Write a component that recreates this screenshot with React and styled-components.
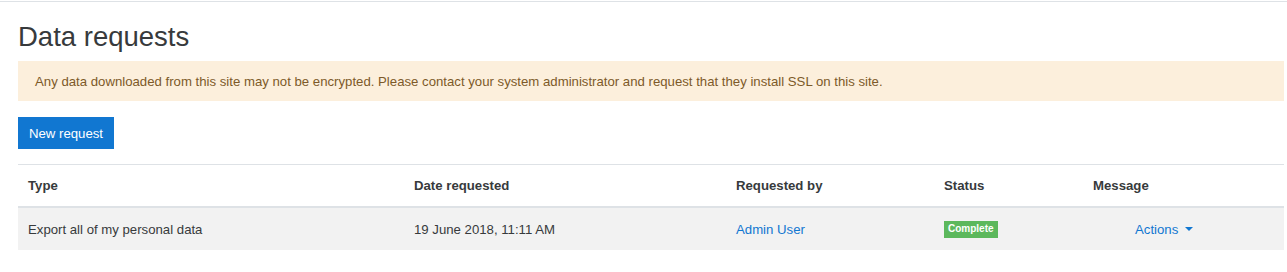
import React from "react";
import styled, { createGlobalStyle } from "styled-components";

const GlobalStyle = createGlobalStyle`
  body {
    margin: 0;
    background: #fff;
    font-family: "Liberation Sans", Arial, sans-serif;
    color: #373a3c;
  }
`;

const TopRule = styled.div`
  height: 1px;
  margin-top: 1px;
  background: #dee2e6;
`;

const Page = styled.div`
  padding: 0 3px 0 18px;
`;

const Heading = styled.h2`
  margin: 0;
  padding-top: 18px;
  font-size: 27.5px;
  font-weight: 400;
  line-height: 33px;
  color: #373a3c;
`;

const Alert = styled.div`
  margin-top: 8px;
  height: 40px;
  display: flex;
  align-items: center;
  padding: 0 17px;
  background: #fcefdc;
  color: #7d5a29;
  font-size: 13.2px;
`;

const Button = styled.button`
  margin-top: 16px;
  height: 32px;
  padding: 0 11px;
  border: none;
  background: #1177d1;
  color: #fff;
  font-family: inherit;
  font-size: 13.2px;
`;

const Table = styled.div`
  margin-top: 15px;
  border-top: 1px solid #dee2e6;
  font-size: 13.2px;
`;

const Row = styled.div`
  display: grid;
  grid-template-columns: 386px 322px 208px 149px 1fr;
  align-items: center;
  height: ${(p) => (p.$head ? 41 : 42)}px;
  background: ${(p) => (p.$head ? "#fff" : "#f2f2f2")};
  border-bottom: ${(p) => (p.$head ? "2px solid #dee2e6" : "none")};
  font-weight: ${(p) => (p.$head ? 700 : 400)};
`;

const Cell = styled.div`
  padding-left: ${(p) => p.$indent || 10}px;
`;

const Link = styled.a`
  color: #1177d1;
  text-decoration: none;
`;

const Badge = styled.span`
  display: inline-block;
  padding: 2px 4px 3px;
  background: #5cb85c;
  color: #fff;
  font-size: 10px;
  font-weight: 700;
  line-height: 12px;
`;

const Caret = styled.span`
  display: inline-block;
  margin-left: 7px;
  vertical-align: 3px;
  border-top: 4px solid #1177d1;
  border-left: 4px solid transparent;
  border-right: 4px solid transparent;
`;

export default function App() {
  return (
    <>
      <GlobalStyle />
      <TopRule />
      <Page>
        <Heading>Data requests</Heading>
        <Alert>
          Any data downloaded from this site may not be encrypted. Please
          contact your system administrator and request that they install SSL
          on this site.
        </Alert>
        <Button>New request</Button>
        <Table>
          <Row $head>
            <Cell>Type</Cell>
            <Cell>Date requested</Cell>
            <Cell>Requested by</Cell>
            <Cell>Status</Cell>
            <Cell>Message</Cell>
          </Row>
          <Row>
            <Cell>Export all of my personal data</Cell>
            <Cell>19 June 2018, 11:11 AM</Cell>
            <Cell>
              <Link href="#">Admin User</Link>
            </Cell>
            <Cell>
              <Badge>Complete</Badge>
            </Cell>
            <Cell $indent={52}>
              <Link href="#">
                Actions
                <Caret />
              </Link>
            </Cell>
          </Row>
        </Table>
      </Page>
    </>
  );
}
